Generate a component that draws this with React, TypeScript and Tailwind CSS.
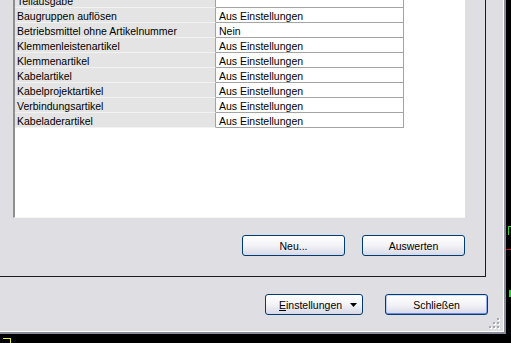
import React from "react";

const rows: [string, string][] = [
  ["Teilausgabe", ""],
  ["Baugruppen auflösen", "Aus Einstellungen"],
  ["Betriebsmittel ohne Artikelnummer", "Nein"],
  ["Klemmenleistenartikel", "Aus Einstellungen"],
  ["Klemmenartikel", "Aus Einstellungen"],
  ["Kabelartikel", "Aus Einstellungen"],
  ["Kabelprojektartikel", "Aus Einstellungen"],
  ["Verbindungsartikel", "Aus Einstellungen"],
  ["Kabeladerartikel", "Aus Einstellungen"],
];

function XpButton({
  children,
  className = "",
  isDefault = false,
}: {
  children: React.ReactNode;
  className?: string;
  isDefault?: boolean;
}) {
  return (
    <button
      className={
        "flex h-[21px] items-center rounded-[3px] border border-[#003c74] bg-gradient-to-b from-[#ffffff] via-[#f3f3f7] to-[#d8d9e6] text-black " +
        (isDefault
          ? "shadow-[inset_0_1px_0_#cee0fb,inset_0_-1px_0_#6d8be3,inset_1px_0_0_#b6cbf5,inset_-1px_0_0_#8ea9ec] "
          : "") +
        className
      }
    >
      {children}
    </button>
  );
}

export default function App() {
  return (
    <div className="relative h-[343px] w-[511px] overflow-hidden bg-black font-['Liberation_Sans',Arial,sans-serif] text-[10.5px] leading-[14px] text-black">
      {/* dialog window */}
      <div className="h-[334px] w-[506px] border-b-2 border-r-2 border-[#8b8b9e]">
        <div className="flex h-full w-full flex-col border-b border-r border-white bg-[#dfdfe3]">
          {/* group frame */}
          <div className="h-[277px] w-[486px] border-b border-r border-[#1c1c1c]">
            {/* list panel */}
            <div className="ml-[13px] h-[218px] w-[452px] overflow-hidden border-b border-l-2 border-[#f6f6f6] border-l-[#8f8f8f] bg-white">
              <div className="-mt-[7px] w-[389px]">
                {rows.map(([k, v]) => (
                  <div key={k} className="flex h-[15px]">
                    <div className="w-[201px] border-b border-r border-b-[#f2f2f2] border-r-[#a3a3a3] bg-[#e4e4e4] pl-[2px] pt-[1px]">
                      {k}
                    </div>
                    <div className="w-[188px] border-b border-r border-[#a3a3a3] pl-[3px] pt-[1px]">
                      {v}
                    </div>
                  </div>
                ))}
              </div>
            </div>
            <div className="ml-[242px] mt-[17px] flex w-[223px] gap-[17px]">
              <XpButton className="w-[103px] justify-center">Neu...</XpButton>
              <XpButton className="w-[103px] justify-center">Auswerten</XpButton>
            </div>
          </div>
          {/* bottom buttons */}
          <div className="ml-[265px] mt-[17px] flex gap-[22px]">
            <XpButton className="w-[98px] pl-[13px] pr-[5px]">
              <span>
                <span className="underline">E</span>instellungen
              </span>
              <svg className="ml-auto" width="7" height="4" viewBox="0 0 7 4">
                <path d="M0 0h7L3.5 4z" fill="#000" />
              </svg>
            </XpButton>
            <XpButton isDefault className="w-[103px] justify-center">
              Schließen
            </XpButton>
          </div>
          {/* resize grip */}
          <div className="ml-auto mr-[3px] mt-auto mb-[2px]">
            <svg width="11" height="11" viewBox="0 0 11 11">
              {[
                [8, 0],
                [4, 4],
                [8, 4],
                [0, 8],
                [4, 8],
                [8, 8],
              ].map(([x, y]) => (
                <g key={`${x}-${y}`}>
                  <rect x={x + 1} y={y + 1} width="2" height="2" fill="#ffffff" />
                  <rect x={x} y={y} width="2" height="2" fill="#a8a8b4" />
                </g>
              ))}
            </svg>
          </div>
        </div>
      </div>

      {/* background screen bits peeking around the window */}
      <div className="absolute left-[508px] top-[226px] h-[9px] w-[3px] border-l border-t border-[#2ed52e]" />
      <div className="absolute left-[506px] top-[249px] h-px w-[5px] bg-[#c81414]" />
      <div className="absolute left-[509px] top-[290px] h-[7px] w-[2px] bg-[#22d822]" />
      <div className="absolute left-[3px] top-[338px] h-[6px] w-[8px] border-r border-t border-[#e8e83a]" />
    </div>
  );
}
